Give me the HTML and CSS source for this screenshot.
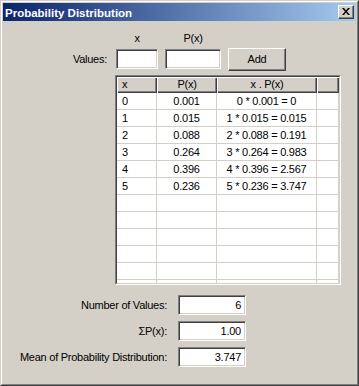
FILE: index.html
```html
<!DOCTYPE html>
<html>
<head>
<meta charset="utf-8">
<link rel="stylesheet" href="styles.css">
</head>
<body>
<div class="window">
  <div class="frame">
    <div class="titlebar">
      <span class="title">Probability Distribution</span>
      <span class="close-btn">
        <svg width="8" height="7" viewBox="0 0 8 7"><path d="M0 0h2l2 2.5L6 0h2L5 3.5 8 7H6L4 4.5 2 7H0l3-3.5z" fill="#000"/></svg>
      </span>
    </div>
    <div class="content">
      <div class="col-heads">
        <span class="head-x">x</span>
        <span class="head-p">P(x)</span>
      </div>
      <div class="values-row">
        <span class="values-label">Values:</span>
        <span class="textbox tb-x"></span>
        <span class="textbox tb-p"></span>
        <span class="button">Add</span>
      </div>
      <div class="grid-outer">
        <div class="grid-inner">
          <div class="grid">
            <div class="hcell left">x</div><div class="hcell">P(x)</div><div class="hcell">x . P(x)</div><div class="hcell"></div>
            <div class="cell left">0</div><div class="cell">0.001</div><div class="cell">0 * 0.001 = 0</div><div class="cell"></div>
            <div class="cell left">1</div><div class="cell">0.015</div><div class="cell">1 * 0.015 = 0.015</div><div class="cell"></div>
            <div class="cell left">2</div><div class="cell">0.088</div><div class="cell">2 * 0.088 = 0.191</div><div class="cell"></div>
            <div class="cell left">3</div><div class="cell">0.264</div><div class="cell">3 * 0.264 = 0.983</div><div class="cell"></div>
            <div class="cell left">4</div><div class="cell">0.396</div><div class="cell">4 * 0.396 = 2.567</div><div class="cell"></div>
            <div class="cell left">5</div><div class="cell">0.236</div><div class="cell">5 * 0.236 = 3.747</div><div class="cell"></div>
            <div class="cell"></div><div class="cell"></div><div class="cell"></div><div class="cell"></div>
            <div class="cell"></div><div class="cell"></div><div class="cell"></div><div class="cell"></div>
            <div class="cell"></div><div class="cell"></div><div class="cell"></div><div class="cell"></div>
            <div class="cell"></div><div class="cell"></div><div class="cell"></div><div class="cell"></div>
            <div class="cell"></div><div class="cell"></div><div class="cell"></div><div class="cell"></div>
            <div class="cell"></div><div class="cell"></div><div class="cell"></div><div class="cell"></div>
          </div>
        </div>
      </div>
      <div class="summary">
        <span class="s-label">Number of Values:</span><span class="textbox s-box">6</span>
        <span class="s-label">ΣP(x):</span><span class="textbox s-box">1.00</span>
        <span class="s-label">Mean of Probability Distribution:</span><span class="textbox s-box">3.747</span>
      </div>
    </div>
  </div>
</div>
</body>
</html>
```

FILE: styles.css
```css
html, body {
  margin: 0;
  padding: 0;
  background: #d4d0c8;
}
body {
  font-family: "Liberation Sans", Arial, sans-serif;
  font-size: 11px;
  letter-spacing: -0.25px;
  color: #000;
}
.window {
  width: 359px;
  height: 386px;
  box-sizing: border-box;
  border: 1px solid;
  border-color: #d4d0c8 #404040 #404040 #d4d0c8;
  background: #d4d0c8;
}
.frame {
  height: 100%;
  box-sizing: border-box;
  border: 1px solid;
  border-color: #fff #808080 #808080 #fff;
  padding: 1px;
}
.titlebar {
  height: 18px;
  background: linear-gradient(to right, #0a246a, #a6caf0);
  display: flex;
  align-items: center;
  justify-content: space-between;
  padding: 0 2px 0 2px;
}
.title {
  color: #fff;
  font-weight: bold;
  font-size: 11.5px;
  font-family: "Liberation Sans", Arial, sans-serif;
  letter-spacing: 0;
  padding-top: 1px;
}
.close-btn {
  width: 16px;
  height: 14px;
  box-sizing: border-box;
  background: #d4d0c8;
  border: 1px solid;
  border-color: #fff #404040 #404040 #fff;
  box-shadow: inset -1px -1px #808080;
  display: flex;
  align-items: center;
  justify-content: center;
  padding: 0 1px 1px 0;
}
.close-btn svg { display: block; }
.content {
  display: flex;
  flex-direction: column;
}
.col-heads {
  display: flex;
  margin-top: 11px;
  height: 13px;
  line-height: 13px;
  padding-left: 113px;
}
.head-x {
  width: 42px;
  text-align: center;
}
.head-p {
  margin-left: 7px;
  width: 56px;
  text-align: center;
}
.values-row {
  display: flex;
  align-items: flex-start;
  margin-top: 3px;
  height: 23px;
}
.values-label {
  width: 104px;
  text-align: right;
  line-height: 23px;
}
.textbox {
  box-sizing: border-box;
  height: 20px;
  background: #fff;
  border: 1px solid;
  border-color: #808080 #fff #fff #808080;
  box-shadow: inset 1px 1px #404040, inset -1px -1px #d4d0c8;
}
.tb-x {
  margin-left: 9px;
  margin-top: 1px;
  width: 42px;
}
.tb-p {
  margin-left: 7px;
  margin-top: 1px;
  width: 56px;
}
.button {
  margin-left: 7px;
  width: 58px;
  height: 23px;
  box-sizing: border-box;
  border: 1px solid;
  border-color: #fff #404040 #404040 #fff;
  box-shadow: inset -1px -1px #808080;
  text-align: center;
  line-height: 20px;
}
.grid-outer {
  margin-top: 4px;
  margin-left: 112px;
  width: 226px;
  height: 210px;
  box-sizing: border-box;
  border: 1px solid;
  border-color: #808080 #fff #fff #808080;
}
.grid-inner {
  height: 100%;
  box-sizing: border-box;
  border: 1px solid;
  border-color: #404040 #d4d0c8 #d4d0c8 #404040;
  background: #fff;
  overflow: hidden;
}
.grid {
  display: grid;
  grid-template-columns: 40px 60px 100px 22px;
  grid-auto-rows: 17px;
  grid-template-rows: 16px;
}
.hcell {
  background: #d4d0c8;
  box-shadow: inset 1px 1px #fff, inset -1px -1px #404040, inset -2px -2px #808080;
  text-align: center;
  line-height: 15px;
}
.cell {
  box-sizing: border-box;
  border-right: 1px solid #d4d0c8;
  border-bottom: 1px solid #d4d0c8;
  text-align: center;
  line-height: 16px;
}
.left {
  text-align: left;
  padding-left: 5px;
}
.summary {
  margin-top: 10px;
  display: grid;
  grid-template-columns: 164px 68px;
  column-gap: 11px;
  row-gap: 6px;
  grid-auto-rows: 20px;
}
.s-label {
  text-align: right;
  line-height: 20px;
}
.s-box {
  text-align: right;
  padding-right: 4px;
  line-height: 18px;
}
```
